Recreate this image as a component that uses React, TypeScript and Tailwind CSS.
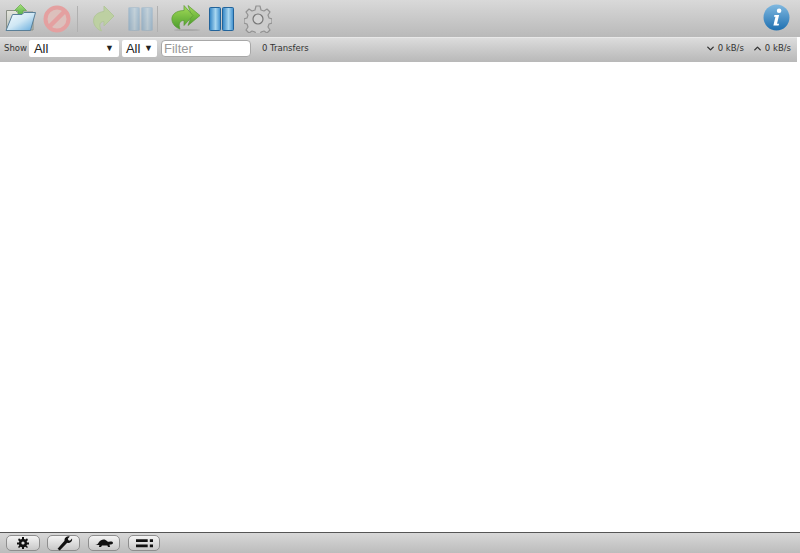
import React from "react";
import { ChevronDown, ChevronUp } from "lucide-react";

const OpenIcon = () => (
  <svg width="32" height="30" viewBox="0 0 32 30" className="shrink-0">
    <defs>
      <linearGradient id="folder" x1="0" y1="0" x2="1" y2="1">
        <stop offset="0" stopColor="#f6fcff" />
        <stop offset="0.5" stopColor="#cfe7f4" />
        <stop offset="1" stopColor="#5fa8dc" />
      </linearGradient>
      <linearGradient id="folderBack" x1="0" y1="0" x2="0" y2="1">
        <stop offset="0" stopColor="#e6e6dc" />
        <stop offset="1" stopColor="#b4bebc" />
      </linearGradient>
      <linearGradient id="openArrow" x1="0" y1="0" x2="0" y2="1">
        <stop offset="0" stopColor="#a8e078" />
        <stop offset="1" stopColor="#58b050" />
      </linearGradient>
    </defs>
    <path d="M1.500 6.500h9l1.500 1.500h16v18H1.500z" fill="url(#folderBack)" stroke="#8a8f86" />
    <path d="M15.500.5l6 6h-3.500v4h-5v-4H9.500z" fill="url(#openArrow)" stroke="#62a848" strokeWidth="0.7" />
    <path d="M7.500 10.500h9.500l2-2h11.500l-5 18H1z" fill="url(#folder)" stroke="#5a7f98" />
  </svg>
);

const StopIcon = () => (
  <svg width="28" height="28" viewBox="0 0 28 28" className="shrink-0">
    <circle cx="14" cy="14" r="11.500" fill="#dcc0bc" stroke="#e4a0a0" strokeWidth="4" />
    <path d="M6.500 21.500L21.500 6.500" stroke="#e4a0a0" strokeWidth="4.500" />
  </svg>
);

const ResumeIcon = () => (
  <svg width="25" height="30" viewBox="0 0 25 30" className="shrink-0">
    <path
      d="M13 2l10 10-10 10v-4.500c-4.500 0-5.500 4-2.500 9.500C0 23-1 9 13 7.500z"
      fill="#bdd0a2"
      stroke="#b2c69a"
    />
  </svg>
);

const ResumeAllIcon = () => (
  <svg width="31" height="30" viewBox="0 0 31 30" className="shrink-0">
    <defs>
      <linearGradient id="green" x1="0" y1="0" x2="0" y2="1">
        <stop offset="0" stopColor="#a4dc58" />
        <stop offset="1" stopColor="#4a9c2c" />
      </linearGradient>
    </defs>
    <ellipse cx="17" cy="26" rx="13" ry="1" fill="#9a9a9a" opacity="0.6" />
    <path d="M18 1.500L30 11.500 18 21.500l3.500-10z" fill="url(#green)" stroke="#5a9a34" strokeWidth="0.7" />
    <path
      d="M14 1.500l9 10-9 10v-5c-4 0-6 3-4 8.500C0 22-3 7 14 6.500z"
      fill="url(#green)"
      stroke="#5a9a34"
      strokeWidth="0.7"
    />
  </svg>
);

const PauseBars = ({ id, stroke }: { id: string; stroke: string }) => (
  <svg width="25" height="24" viewBox="0 0 25 24" className="shrink-0">
    <defs>
      <linearGradient id={id} x1="0" y1="0" x2="1" y2="0">
        <stop offset="0" stopColor="#2f82c4" />
        <stop offset="0.55" stopColor="#a8d6f0" />
        <stop offset="1" stopColor="#3a8ccc" />
      </linearGradient>
    </defs>
    <rect x="0.5" y="0.5" width="11" height="23" rx="1" fill={`url(#${id})`} stroke={stroke} />
    <rect x="13.5" y="0.5" width="11" height="23" rx="1" fill={`url(#${id})`} stroke={stroke} />
  </svg>
);

const GearIcon = () => (
  <svg width="28" height="28" viewBox="0 0 28 28" className="shrink-0">
    <path
      d="M12 1h4l1 4 3 1 3-2 3 3-2 3 1 3 3 1v4l-3 1-1 3 2 3-3 3-3-2-3 1-1 3h-4l-1-3-3-1-3 2-3-3 2-3-1-3-3-1v-4l3-1 1-3-2-3 3-3 3 2 3-1z"
      fill="#cccccc"
      stroke="#929292"
      strokeWidth="1.200"
      strokeLinejoin="round"
    />
    <circle cx="14" cy="14" r="5" fill="#d4d4d4" stroke="#767676" strokeWidth="1.200" />
  </svg>
);

const InfoIcon = () => (
  <svg width="27" height="27" viewBox="0 0 26 26" className="shrink-0">
    <defs>
      <linearGradient id="info" x1="0" y1="0" x2="0" y2="1">
        <stop offset="0" stopColor="#7fb8e0" />
        <stop offset="1" stopColor="#1e6fb0" />
      </linearGradient>
    </defs>
    <circle cx="13" cy="13" r="12.500" fill="url(#info)" />
    <circle cx="15.500" cy="6.500" r="2.200" fill="#fff" />
    <path d="M11 10.500h4.500l-2 8.500h2l-.5 1.800h-5l2-8.500h-1.400z" fill="#fff" />
  </svg>
);

const FooterButton = ({ children, className }: { children: React.ReactNode; className: string }) => (
  <button className={`${className} h-[16px] rounded-[5px] border border-[#8e8e8e] bg-gradient-to-b from-[#f4f4f4] to-[#c8c8c8] flex items-center justify-center`}>
    {children}
  </button>
);

const App = () => {
  return (
    <div className="h-[553px] w-[800px] flex flex-col bg-white overflow-hidden font-['Liberation_Sans',sans-serif]">
      <div className="h-[37px] shrink-0 flex items-center pl-[5px] pr-[10px] bg-gradient-to-b from-[#d9d9d9] to-[#b9b9b9]">
        <OpenIcon />
        <div className="ml-[6px]">
          <StopIcon />
        </div>
        <div className="h-[26px] w-px bg-[#b0b0b0] ml-[6px] mr-[13px]" />
        <ResumeIcon />
        <div className="ml-[12px] opacity-30">
          <PauseBars id="pauseOne" stroke="#6f9fc4" />
        </div>
        <div className="h-[26px] w-px bg-[#b0b0b0] ml-[4px] mr-[12px]" />
        <ResumeAllIcon />
        <div className="ml-[8px]">
          <PauseBars id="pauseAll" stroke="#22639a" />
        </div>
        <div className="ml-[10px]">
          <GearIcon />
        </div>
        <div className="ml-auto mb-[2px]">
          <InfoIcon />
        </div>
      </div>

      <div className="h-[25px] w-[797px] shrink-0 flex items-center pl-[4px] pb-[3px] text-[8.5px] text-[#333] border-t border-[#e8e8e8] bg-gradient-to-b from-[#dcdcdc] to-[#b8b8b8] font-['DejaVu_Sans',sans-serif]">
        <span>Show</span>
        <div className="ml-[2px] w-[90px] h-[17px] bg-white rounded-[2px] flex items-center justify-between pl-[5px] pr-[5px] text-[13px] text-[#222] font-['Liberation_Sans',sans-serif]">
          All
          <span className="text-[9px]">▼</span>
        </div>
        <div className="ml-[3px] w-[35px] h-[17px] bg-white rounded-[2px] flex items-center justify-between pl-[4px] pr-[4px] text-[13px] text-[#222] font-['Liberation_Sans',sans-serif]">
          All
          <span className="text-[9px]">▼</span>
        </div>
        <input
          readOnly
          placeholder="Filter"
          className="ml-[4px] w-[90px] h-[17px] bg-white rounded-[4px] border border-[#a8a8a8] px-[2px] text-[13px] placeholder:text-[#999] font-['Liberation_Sans',sans-serif]"
        />
        <span className="ml-[11px]">0 Transfers</span>
        <div className="ml-auto flex items-center pr-[6px]">
          <ChevronDown size={11} strokeWidth={3} />
          <span className="ml-[2px]">0 kB/s</span>
          <ChevronUp size={11} strokeWidth={3} className="ml-[8px]" />
          <span className="ml-[2px]">0 kB/s</span>
        </div>
      </div>

      <div className="flex-1" />

      <div className="h-[21px] shrink-0 flex items-center pl-[6px] border-t border-[#555] bg-gradient-to-b from-[#d8d8d8] to-[#bcbcbc]">
        <FooterButton className="w-[34px]">
          <svg width="12" height="12" viewBox="0 0 12 12">
            <path
              d="M5 0h2v2l1.500.6L10 1.200 11 3 9.700 4.200 10 5.500h2v2h-2l-.5 1.300L11 10l-1 1-1.500-1.300L7 10.200V12H5v-1.800l-1.500-.5L2 11l-1-1 1.200-1.200L2 7.500H0v-2h2l.3-1.300L1 3l1-1.800 1.500 1.400L5 2z"
              fill="#111"
            />
            <circle cx="6" cy="6" r="1.600" fill="#ddd" />
          </svg>
        </FooterButton>
        <FooterButton className="ml-[7px] w-[33px]">
          <svg width="18" height="15" viewBox="0 0 16 14">
            <path d="M10 1a3.500 3.500 0 0 1 3.500-.6L11.500 2.500l.6 1.500 1.500.4 1.900-2a3.500 3.500 0 0 1-4.500 4L4 13.500 2 12l6.500-7.500A3.500 3.500 0 0 1 10 1z" fill="#111" />
          </svg>
        </FooterButton>
        <FooterButton className="ml-[8px] w-[32px]">
          <svg width="18" height="10" viewBox="0 0 18 10">
            <path d="M0 7c2 0 3-1 4-3 2-3 6-3.500 8-1 1 1 1.500 1 3 .6 1-.3 3 0 3 1.400 0 1-2 1.500-3.500 1.500L15 9h-2l-.6-1.500H7L6 9H4l.4-2H0z" fill="#111" />
          </svg>
        </FooterButton>
        <FooterButton className="ml-[8px] w-[32px]">
          <svg width="17" height="9" viewBox="0 0 16 8">
            <path d="M0 0h11v2.500H0zM0 5h11v2.500H0zM13 0h3v2.500h-3zM13 5h3v2.500h-3z" fill="#111" />
          </svg>
        </FooterButton>
      </div>
    </div>
  );
};

export default App;
